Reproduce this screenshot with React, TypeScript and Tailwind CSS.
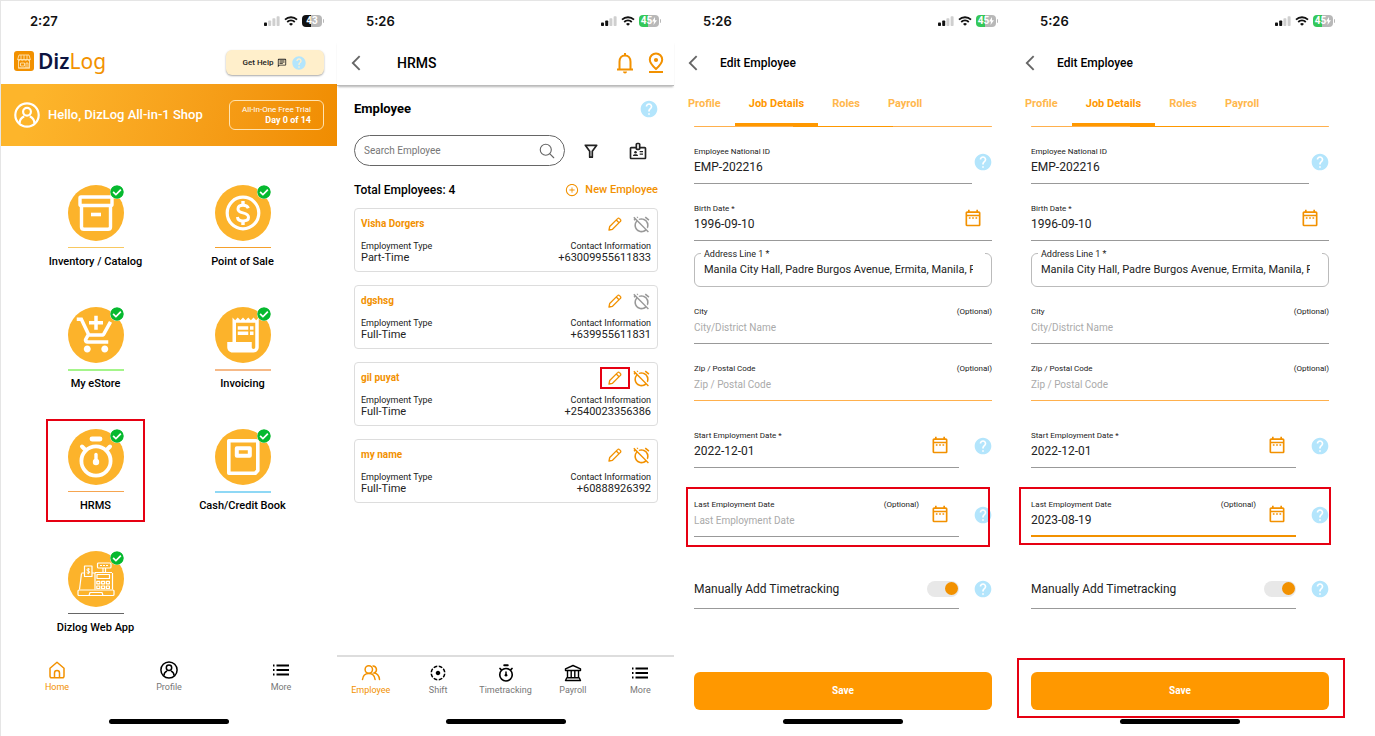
import { useState, type ReactNode } from 'react';
import { IoSearchOutline } from 'react-icons/io5';
import {
  MdAddShoppingCart,
  MdAlarmOff,
  MdFilterTiltShift,
  MdHelp,
  MdOutlineArrowBackIosNew,
  MdOutlineBadge,
  MdOutlineChat,
  MdOutlineDateRange,
  MdReceiptLong,
} from 'react-icons/md';
import { AiOutlinePlusCircle } from 'react-icons/ai';
import { FaCheckCircle } from 'react-icons/fa';

/* ---------- drawings ---------- */

function BoxIcon() {
  return (
    <svg viewBox="0 0 36 36" className="size-9" fill="none" stroke="white" strokeWidth="3.400" strokeLinejoin="round" aria-hidden="true">
      <rect x="2" y="2" width="32" height="8.500" rx="1" />
      <path d="M3.500 10.500V32a2.500 2.500 0 0 0 2.500 2.300h24a2.500 2.500 0 0 0 2.500-2.300V10.500" />
      <path d="M13 19.500h10" strokeWidth="3.600" />
    </svg>
  );
}

function DollarIcon() {
  return (
    <svg viewBox="0 0 36 36" className="size-9" fill="none" stroke="white" aria-hidden="true">
      <circle cx="18" cy="18" r="15.800" strokeWidth="3.200" />
      <path d="M23.300 13.300c-.6-2-2.500-3.100-5.300-3.100-3 0-5 1.400-5 3.700 0 2.600 2.300 3.300 5 4 3 .8 5.500 1.600 5.500 4.300 0 2.400-2.300 3.700-5.500 3.700s-5.300-1.400-5.600-3.900" strokeWidth="3" />
      <path d="M18 6v4.500M18 25.500V30" strokeWidth="3.400" />
    </svg>
  );
}

function BookIcon() {
  return (
    <svg viewBox="0 0 34 38" className="h-[38px] w-[34px]" fill="none" stroke="white" strokeLinejoin="round" aria-hidden="true">
      <path d="M2.800 2.800h27.200a1.800 1.800 0 0 1 1.800 1.800V32.500l-2.500 2.800H2.800z" strokeWidth="3.600" />
      <rect x="10.800" y="10.300" width="13" height="7.400" strokeWidth="4" />
    </svg>
  );
}

function RegisterIcon() {
  return (
    <svg viewBox="0 0 40 36" className="h-9 w-10" fill="none" stroke="white" strokeWidth="1.200" strokeLinejoin="round" aria-hidden="true">
      <path d="M5.500 12.500 3.500 28.500M9 12H5.500M16 12h3M36.500 12v16.500" />
      <rect x="8.500" y="5" width="7.500" height="10.500" />
      <path d="M13.800 8.300c-.5-.6-3-.8-3 .6s3 .8 3 2.200-2.500 1.300-3.100.5M12.300 7v6.200" strokeWidth="1" />
      <rect x="21.500" y="2" width="13.500" height="5" rx="1" />
      <path d="M24 4.500h8.500" strokeDasharray="2 1" />
      <path d="M27 7v4.500M29.500 7v4.500M19 11.500h17" />
      <path d="M19 28.500V12M21 13.500h12.500v4H21z" />
      <path d="M20.800 20.300h3v2.500h-3zM25.600 20.300h3v2.500h-3zM30.400 20.300h3v2.500h-3zM20.800 25h3v2.500h-3zM25.600 25h3v2.500h-3zM30.400 25h3v2.500h-3z" />
      <rect x="2" y="29" width="36" height="5.500" rx="1" />
      <path d="M13 34.500l1-3h12l1 3" />
    </svg>
  );
}

function StopwatchIcon({ className }: { className: string }) {
  return (
    <svg viewBox="0 0 36 42" className={className} fill="none" stroke="currentColor" strokeLinecap="round" aria-hidden="true">
      <circle cx="18" cy="25" r="14.600" strokeWidth="3.800" />
      <path d="M14 3h8" strokeWidth="4.800" />
      <path d="M4 10.500l2.500 2.500M32 10.500 29.500 13" strokeWidth="4" />
      <path d="M18 18.500v7" strokeWidth="3.400" />
      <circle cx="18" cy="26" r="3.200" fill="currentColor" stroke="none" />
    </svg>
  );
}

function HomeIcon() {
  return (
    <svg viewBox="0 0 18 18" className="size-[18px]" fill="none" stroke="currentColor" strokeWidth="1.500" strokeLinejoin="round" aria-hidden="true">
      <path d="M2 7.300 9 1.300l7 6v8a1.500 1.500 0 0 1-1.500 1.500h-11A1.500 1.500 0 0 1 2 15.300z" />
      <path d="M6.500 16.500V12a2.500 2.500 0 0 1 5 0v4.500" />
    </svg>
  );
}

function PersonIcon({ className }: { className: string }) {
  return (
    <svg viewBox="0 0 24 24" className={className} fill="none" stroke="currentColor" strokeWidth="2" aria-hidden="true">
      <circle cx="12" cy="12" r="10.800" />
      <circle cx="12" cy="9" r="3.600" />
      <path d="M5.200 19.500c0-3 1.800-5 4.200-6.300M18.800 19.500c0-3-1.800-5-4.200-6.300" />
    </svg>
  );
}

function PeopleIcon() {
  return (
    <svg viewBox="0 0 20 18" className="h-[18px] w-5" fill="none" stroke="currentColor" strokeWidth="1.500" strokeLinecap="round" aria-hidden="true">
      <circle cx="7.800" cy="5.500" r="3.700" />
      <path d="M1.500 15.500c.4-3.500 2.300-6 6.300-6s5.900 2.500 6.300 6" />
      <path d="M12 1.900a3.700 3.700 0 0 1 1.200 7.100c3 .5 4.900 2.800 5.300 6.500" />
    </svg>
  );
}

function BankIcon() {
  return (
    <svg viewBox="0 0 18 18" className="size-[18px]" fill="none" stroke="currentColor" strokeWidth="1.400" strokeLinejoin="round" aria-hidden="true">
      <path d="M1.500 4.800 9 1.500l7.500 3.300v1.700h-15z" />
      <path d="M3.500 6.500v7.300M7.200 6.500v7.300M10.800 6.500v7.300M14.500 6.500v7.300M2.800 13.800h12.400l1.300 2.700h-15z" />
    </svg>
  );
}

function ListIcon() {
  return (
    <svg viewBox="0 0 18 18" className="size-[18px]" stroke="currentColor" strokeWidth="1.800" aria-hidden="true">
      <path d="M1 4.500h1.500M1 9h1.500M1 13.500h1.500M4.500 4.500H17M4.500 9H17M4.500 13.500H17" />
    </svg>
  );
}

function BellIcon() {
  return (
    <svg viewBox="0 0 18 22" className="h-[22px] w-[18px]" fill="none" stroke="currentColor" strokeWidth="2" aria-hidden="true">
      <path d="M1 17.500h16M3.500 17.500V9.800C3.500 6 5.700 3.500 9 3.500s5.500 2.500 5.500 6.300v7.700" />
      <path d="M9 1v2.500" />
      <path d="M7 19.500h4a2 2 0 0 1-4 0z" fill="currentColor" stroke="none" />
    </svg>
  );
}

function PinIcon() {
  return (
    <svg viewBox="0 0 18 22" className="h-[22px] w-[18px]" fill="none" stroke="currentColor" strokeWidth="2" aria-hidden="true">
      <path d="M9 17C5 13.300 2.800 10.600 2.800 7.700a6.200 6.200 0 0 1 12.400 0c0 2.900-2.200 5.600-6.200 9.300z" />
      <circle cx="9" cy="8" r="2.100" fill="currentColor" stroke="none" />
      <path d="M2 20h14" />
    </svg>
  );
}

function FunnelIcon() {
  return (
    <svg viewBox="0 0 18 18" className="size-[18px]" fill="none" stroke="currentColor" strokeWidth="1.700" strokeLinejoin="round" aria-hidden="true">
      <path d="M3.300 3.300h11.400l-4.400 5.900v6H7.700v-6z" />
    </svg>
  );
}

function PencilIcon() {
  return (
    <svg viewBox="0 0 14 14" className="size-3.5" fill="none" stroke="currentColor" strokeWidth="1.300" strokeLinejoin="round" aria-hidden="true">
      <path d="M1 13l.7-3.500 7.900-7.900a1.300 1.300 0 0 1 1.900 0l.9.900a1.300 1.300 0 0 1 0 1.900L4.500 12.300zM8.300 3l2.700 2.700" />
    </svg>
  );
}

function ShopLogo() {
  return (
    <svg viewBox="0 0 20 20" className="size-5" aria-hidden="true">
      <rect width="20" height="20" rx="3" fill="#f29100" />
      <g fill="none" stroke="#ffe3b0" strokeWidth="0.900">
        <path d="M5 4h10l1.300 4.500H3.700zM4.500 9v8h11V9M4 17h12" />
        <path d="M7 4v5M10 4v5M13 4v5M3.700 8.500c.7 1.500 2.500 1.500 3.100 0 .7 1.500 2.500 1.500 3.200 0 .7 1.500 2.500 1.500 3.200 0 .7 1.500 2.500 1.500 3.100 0" />
        <path d="M6.500 12h4v3h-4zM12 17v-5h2v5" />
      </g>
    </svg>
  );
}

function StatusIcons({ level, charging, bars }: { level: string; charging: boolean; bars: number }) {
  return (
    <div className="flex items-center gap-1">
      <svg viewBox="0 0 16 10" className="h-[10px] w-4" aria-hidden="true">
        {[0, 1, 2, 3].map((i) => (
          <rect key={i} x={i * 4.2} y={6.5 - i * 2.1} width="3" height={3.5 + i * 2.1} rx="0.800" fill={i < bars ? '#111' : '#cfcfcf'} />
        ))}
      </svg>
      <svg viewBox="0 0 14 10" className="h-[10px] w-3.5" fill="none" stroke="#111" strokeWidth="1.800" aria-hidden="true">
        <path d="M1 3.600a8.800 8.800 0 0 1 12 0M3.200 6a5.600 5.600 0 0 1 7.600 0" />
        <path d="M7 9.800 5 7.900a3 3 0 0 1 4 0z" fill="#111" stroke="none" />
      </svg>
      <div className="flex items-center gap-px">
        <span
          className={
            charging
              ? 'flex h-3 w-5 items-center justify-center rounded bg-linear-to-r from-[#34c759] from-45% to-[#b8b8b8] to-45% text-[10px] leading-3 font-bold text-white'
              : 'flex h-3 w-5 items-center justify-center rounded bg-linear-to-r from-[#111] from-45% to-[#b8b8b8] to-45% text-[10px] leading-3 font-bold text-white'
          }
        >
          {level}
          {charging && (
            <svg viewBox="0 0 5 8" className="h-2 w-[5px]" fill="white" aria-hidden="true">
              <path d="M3 0 0 4.500h2L1.500 8 5 3.300H3z" />
            </svg>
          )}
        </span>
        <span className="h-1 w-px rounded-r bg-[#b8b8b8]" />
      </div>
    </div>
  );
}

/* ---------- shared pieces ---------- */

type Status = { time: string; level: string; charging: boolean; bars: number };

function StatusBar({ time, level, charging, bars }: Status) {
  return (
    <div className="flex h-10 items-center justify-between pr-[13px] pl-[29px]">
      <span className="font-['Inter'] text-[13px] leading-5 font-semibold text-[#111]">{time}</span>
      <StatusIcons level={level} charging={charging} bars={bars} />
    </div>
  );
}

function Phone({ children, ...status }: Status & { children: ReactNode }) {
  return (
    <section className="flex min-w-0 flex-col">
      <StatusBar {...status} />
      {children}
      <div className="mx-auto mb-3 h-[5px] w-[120px] shrink-0 rounded-full bg-black" />
    </section>
  );
}

function Help() {
  return (
    <button type="button" aria-label="Help" className="flex size-[18px] shrink-0 items-center justify-center text-[#b3e5fc]">
      <MdHelp className="size-5 shrink-0" />
    </button>
  );
}

function Highlight({ className }: { className: string }) {
  return <span className={`pointer-events-none absolute border-2 border-[#e60012] ${className}`} />;
}

function NavItem({ icon, label, active }: { icon: ReactNode; label: string; active?: boolean }) {
  return (
    <a href="#" className={`flex flex-1 flex-col items-center gap-0.5 ${active ? 'text-[#f29100]' : 'text-black'}`}>
      {icon}
      <span className={`text-[9px] leading-3 ${active ? '' : 'text-[#777]'}`}>{label}</span>
    </a>
  );
}

/* ---------- home ---------- */

const tiles = [
  { name: 'Inventory / Catalog', rule: 'h-px mb-1.5 bg-[#f8c860]', icon: <BoxIcon /> },
  { name: 'Point of Sale', rule: 'h-px mb-1.5 bg-[#f5a02c]', icon: <DollarIcon /> },
  { name: 'My eStore', rule: 'h-0.5 mb-[5px] bg-[#a4f58a]', icon: <MdAddShoppingCart className="size-[42px]" /> },
  { name: 'Invoicing', rule: 'h-0.5 mb-[5px] bg-[#f6b987]', icon: <MdReceiptLong className="size-[42px]" /> },
  { name: 'HRMS', rule: 'h-px mb-1.5 bg-[#f6a550]', icon: <StopwatchIcon className="h-[42px] w-9" />, marked: true },
  { name: 'Cash/Credit Book', rule: 'h-0.5 mb-[5px] bg-[#8fd8f5]', icon: <BookIcon /> },
  { name: 'Dizlog Web App', rule: 'h-px mb-1.5 bg-[#666]', icon: <RegisterIcon /> },
];

function HomeScreen() {
  return (
    <Phone time="2:27" level="43" charging={false} bars={1}>
      <header className="flex h-[43px] items-center justify-between px-[13px]">
        <div className="flex items-center gap-1 pb-[3px]">
          <ShopLogo />
          <span className="font-['Noto_Sans'] text-[21px] leading-6 text-[#f29100]">
            <span className="font-semibold text-[#0d1440]">Diz</span>Log
          </span>
        </div>
        <button type="button" className="flex h-[25px] w-[98px] items-center justify-center gap-1 rounded-md bg-[#ffefcb] text-[8px] leading-3 font-medium text-[#222] shadow-[0_1px_2px_rgba(0,0,0,0.35)]">
          Get Help
          <MdOutlineChat className="size-2.5" />
          <MdHelp className="size-4 text-[#b3e5fc]" />
        </button>
      </header>
      <div className="flex h-[62px] items-center bg-linear-105 from-[#fdb52b] from-10% to-[#f08c00] px-[13px] text-white">
        <PersonIcon className="size-[26px]" />
        <span className="ml-2 flex-1 text-[13px] leading-4 font-medium">Hello, DizLog All-in-1 Shop</span>
        <button type="button" className="flex h-[30px] w-[95px] flex-col items-end justify-center rounded-md border border-[#ffe3b0] pr-3 text-[8px] leading-[10px]">
          All-In-One Free Trial
          <span className="text-[9px] font-bold">Day 0 of 14</span>
        </button>
      </div>
      <main className="grid grid-cols-2 gap-y-[37px] px-[21px] pt-[39px]">
        {tiles.map((t) => (
          <a key={t.name} href="#" className="relative mx-auto flex w-[97px] flex-col items-center">
            <span className="relative flex size-14 items-center justify-center rounded-full bg-[#fcb32b] text-white">
              {t.icon}
              <FaCheckCircle className="absolute top-0 right-0 size-3.5 rounded-full bg-white text-[#06b92f]" />
            </span>
            <span className={`mt-1.5 w-14 ${t.rule}`} />
            <span className="text-[11px] leading-4 font-medium whitespace-nowrap text-black">{t.name}</span>
            {t.marked && <Highlight className="-inset-x-px -top-2.5 -bottom-2" />}
          </a>
        ))}
      </main>
      <nav className="mt-auto mb-[26px] flex">
        <NavItem active icon={<HomeIcon />} label="Home" />
        <NavItem icon={<PersonIcon className="size-[18px]" />} label="Profile" />
        <NavItem icon={<ListIcon />} label="More" />
      </nav>
    </Phone>
  );
}

/* ---------- employee list ---------- */

const employees = [
  { name: 'Visha Dorgers', type: 'Part-Time', phone: '+63009955611833', on: false },
  { name: 'dgshsg', type: 'Full-Time', phone: '+639955611831', on: false },
  { name: 'gil puyat', type: 'Full-Time', phone: '+2540023356386', on: true, marked: true },
  { name: 'my name', type: 'Full-Time', phone: '+60888926392', on: true },
];

function ListScreen() {
  return (
    <Phone time="5:26" level="45" charging bars={2}>
      <header className="flex h-[45px] items-center border-b border-[#bbb] pr-[9px] pl-[10px] shadow-[0_2px_2px_-1px_rgba(0,0,0,0.3)]">
        <button type="button" aria-label="Back" className="text-[#666]">
          <MdOutlineArrowBackIosNew className="size-[18px]" />
        </button>
        <h1 className="ml-8 flex-1 text-sm leading-5 font-medium text-black">HRMS</h1>
        <button type="button" aria-label="Notifications" className="text-[#f29100]">
          <BellIcon />
        </button>
        <button type="button" aria-label="Location" className="ml-[13px] text-[#f29100]">
          <PinIcon />
        </button>
      </header>
      <main className="flex flex-col pt-[13px] pr-4 pl-[17px]">
        <div className="flex h-5 items-center justify-between">
          <h2 className="text-[13px] leading-5 font-bold text-black">Employee</h2>
          <Help />
        </div>
        <div className="mt-4 flex items-center pr-2.5">
          <label className="flex h-[31px] min-w-0 flex-1 items-center rounded-full border border-[#666] pr-2 pl-[9px]">
            <input aria-label="Search Employee" placeholder="Search Employee" className="w-0 min-w-0 flex-1 text-[10px] leading-4 outline-none placeholder:text-[#777]" />
            <IoSearchOutline className="size-[18px] text-[#666]" />
          </label>
          <button type="button" aria-label="Filter" className="ml-[17px] text-[#222]">
            <FunnelIcon />
          </button>
          <button type="button" aria-label="Badge" className="ml-7 text-[#222]">
            <MdOutlineBadge className="size-5" />
          </button>
        </div>
        <div className="mt-3.5 flex h-5 items-center justify-between">
          <p className="text-xs leading-5 font-medium text-black">Total Employees: 4</p>
          <button type="button" className="flex items-center gap-1.5 text-[11px] leading-5 font-medium text-[#f29100]">
            <AiOutlinePlusCircle className="size-3.5" />
            New Employee
          </button>
        </div>
        <ul className="mt-2 flex flex-col gap-[13px]">
          {employees.map((e) => (
            <li key={e.name} className="rounded border border-[#ddd] px-[6px] pt-[5px] pb-[7px] text-[#222]">
              <div className="flex h-5 items-center">
                <span className="flex-1 text-[10px] leading-4 font-bold text-[#f29100]">{e.name}</span>
                <button type="button" aria-label={`Edit ${e.name}`} className="relative text-[#f29100]">
                  <PencilIcon />
                  {e.marked && <Highlight className="-inset-x-2 -inset-y-1" />}
                </button>
                <button type="button" aria-label={`Alarm ${e.name}`} className={e.on ? 'ml-2.5 text-[#f29100]' : 'ml-2.5 text-[#999]'}>
                  <MdAlarmOff className="size-[19px]" />
                </button>
              </div>
              <div className="mt-[7px] flex justify-between text-[9px] leading-[11px]">
                <span>Employment Type</span>
                <span>Contact Information</span>
              </div>
              <div className="flex justify-between text-[11px] leading-3">
                <span>{e.type}</span>
                <span>{e.phone}</span>
              </div>
            </li>
          ))}
        </ul>
      </main>
      <nav className="mt-auto mb-[23px] flex border-t-2 border-[#ddd] pt-[7px]">
        <NavItem active icon={<PeopleIcon />} label="Employee" />
        <NavItem icon={<MdFilterTiltShift className="size-[18px]" />} label="Shift" />
        <NavItem icon={<StopwatchIcon className="h-[18px] w-4" />} label="Timetracking" />
        <NavItem icon={<BankIcon />} label="Payroll" />
        <NavItem icon={<ListIcon />} label="More" />
      </nav>
    </Phone>
  );
}

/* ---------- employee form ---------- */

type FieldProps = {
  id: string;
  label: string;
  value?: string;
  placeholder?: string;
  optional?: boolean;
  calendar?: boolean;
  line?: string;
};

function Field({ id, label, value = '', placeholder, optional, calendar, line = 'border-b border-[#999] pb-[7px]' }: FieldProps) {
  const [text, setText] = useState(value);
  return (
    <div className={`flex min-w-0 flex-1 items-center ${line}`}>
      <div className="min-w-0 flex-1">
        <div className="flex justify-between text-[8px] leading-3 text-[#222]">
          <label htmlFor={id}>{label}</label>
          {optional && <span>(Optional)</span>}
        </div>
        <input
          id={id}
          value={text}
          placeholder={placeholder}
          onChange={(e) => setText(e.target.value)}
          className="block h-[18px] w-full text-xs leading-[18px] text-[#222] outline-none placeholder:text-[10px] placeholder:text-[#aaa]"
        />
      </div>
      {calendar && (
        <button type="button" aria-label={`Pick ${label}`} className="mr-[9px] ml-[11px] text-[#f29100]">
          <MdOutlineDateRange className="size-5" />
        </button>
      )}
    </div>
  );
}

const tabs = ['Profile', 'Job Details', 'Roles', 'Payroll'];

function FormScreen({ id, ended }: { id: string; ended?: boolean }) {
  return (
    <Phone time="5:26" level="45" charging bars={2}>
      <header className="flex h-11 items-center pl-[10px]">
        <button type="button" aria-label="Back" className="text-[#666]">
          <MdOutlineArrowBackIosNew className="size-[18px]" />
        </button>
        <h1 className="ml-[18px] text-xs leading-5 font-medium text-black">Edit Employee</h1>
      </header>
      <nav className="flex h-[41px]">
        {tabs.map((t) => (
          <button
            key={t}
            type="button"
            className={
              t === 'Job Details'
                ? 'border-b-3 border-[#ff9800] px-3.5 pt-px text-[11px] font-bold text-[#ff9800]'
                : 'border-b-3 border-transparent px-3.5 pt-px text-[11px] font-bold text-[#ffb74d]'
            }
          >
            {t}
          </button>
        ))}
      </nav>
      <div className="mr-[19px] ml-5 flex h-px rounded bg-[#ffb04d]">
        <span className="mx-auto w-1/3 bg-[#ff9800]" />
      </div>
      <form className="flex flex-1 flex-col pt-[19px] pr-[19px] pl-5" onSubmit={(e) => e.preventDefault()}>
        <div className="flex items-center gap-0.5">
          <Field id={`${id}-national`} label="Employee National ID" value="EMP-202216" />
          <div className="pb-1.5">
            <Help />
          </div>
        </div>
        <div className="mt-[19px] flex">
          <Field id={`${id}-birth`} label="Birth Date *" value="1996-09-10" calendar />
        </div>
        <div className="relative mt-3 flex h-[34px] items-end rounded-md border border-[#bbb] pr-[18px] pb-[7px] pl-[9px]">
          <label htmlFor={`${id}-address`} className="absolute inset-x-1.5 -top-1.5 bg-white pl-[3px] text-[9px] leading-3 text-[#222]">
            Address Line 1 *
          </label>
          <input
            id={`${id}-address`}
            defaultValue="Manila City Hall, Padre Burgos Avenue, Ermita, Manila, Philippines"
            className="h-[18px] w-full text-[11px] leading-[18px] text-[#222] outline-none"
          />
        </div>
        <div className="mt-[19px] flex">
          <Field id={`${id}-city`} label="City" placeholder="City/District Name" optional />
        </div>
        <div className="mt-[19px] flex">
          <Field id={`${id}-zip`} label="Zip / Postal Code" placeholder="Zip / Postal Code" optional line="border-b border-[#ffb04d] pb-[7px]" />
        </div>
        <div className="mt-[29px] flex items-center gap-[15px]">
          <Field id={`${id}-start`} label="Start Employment Date *" value="2022-12-01" calendar />
          <div className="pb-1.5">
            <Help />
          </div>
        </div>
        <div className="relative mt-[31px] flex items-center gap-[15px]">
          <Field
            id={`${id}-last`}
            label="Last Employment Date"
            value={ended ? '2023-08-19' : ''}
            placeholder="Last Employment Date"
            optional
            calendar
            line={ended ? 'border-b-2 border-[#f29100] pb-1.5' : 'border-b border-[#999] pb-[7px]'}
          />
          <div className="pb-1.5">
            <Help />
          </div>
          {ended ? <Highlight className="-top-3 -right-0.5 -bottom-2 -left-3" /> : <Highlight className="-top-3 right-0.5 -bottom-2.5 -left-2" />}
        </div>
        <div className="mt-8 flex items-center gap-[15px]">
          <label className="flex h-10 flex-1 items-center justify-between border-b border-[#999] text-xs leading-4 text-[#222]">
            Manually Add Timetracking
            <input
              type="checkbox"
              defaultChecked
              className="flex h-4 w-8 appearance-none items-center rounded-full bg-[#e8e8e8] px-px before:size-[13px] before:rounded-full before:bg-[#999] checked:justify-end checked:before:bg-[#f29100]"
            />
          </label>
          <Help />
        </div>
        <div className="relative mt-auto mb-[9px] flex">
          <button type="submit" className="h-[38px] flex-1 rounded-md bg-[#ff9800] text-[10px] leading-4 font-bold text-white">
            Save
          </button>
          {ended && <Highlight className="-top-3.5 -right-4 -bottom-2 -left-3.5" />}
        </div>
      </form>
    </Phone>
  );
}

export default function App() {
  return (
    <div className="grid min-h-screen grid-cols-4 overflow-hidden border-t border-[#e5e5e5] bg-white pr-[27px] font-['Roboto',sans-serif]">
      <div className="grid border-l border-[#e5e5e5]">
        <HomeScreen />
      </div>
      <ListScreen />
      <FormScreen id="before" />
      <FormScreen id="after" ended />
    </div>
  );
}
